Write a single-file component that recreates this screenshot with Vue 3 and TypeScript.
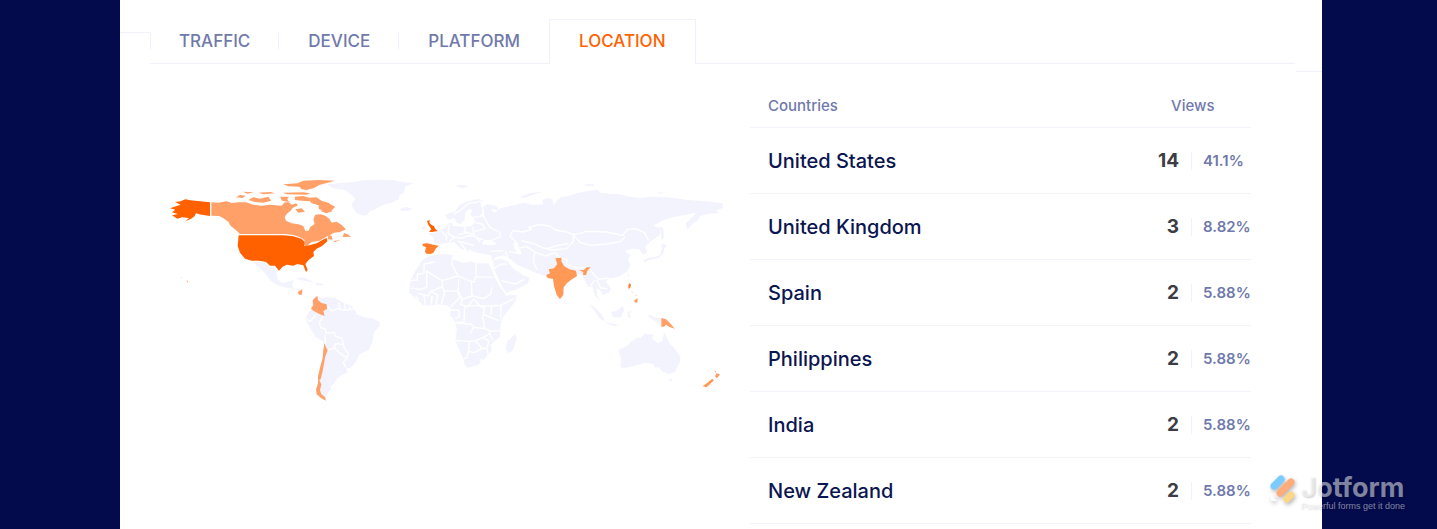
<script setup lang="ts">
interface Country {
  name: string
  views: number
  share: string
}

interface Shape {
  tone: 'land' | 'top' | 'high' | 'mid' | 'low' | 'water' | 'border'
  d: string
}

interface Region {
  name: string
  x: number
  y: number
  shapes: Shape[]
}

const tabs: string[] = ['TRAFFIC', 'DEVICE', 'PLATFORM', 'LOCATION']
const active = 'LOCATION'

const countries: Country[] = [
  { name: 'United States', views: 14, share: '41.1%' },
  { name: 'United Kingdom', views: 3, share: '8.82%' },
  { name: 'Spain', views: 2, share: '5.88%' },
  { name: 'Philippines', views: 2, share: '5.88%' },
  { name: 'India', views: 2, share: '5.88%' },
  { name: 'New Zealand', views: 2, share: '5.88%' },
]

const regions: Region[] = [
  {
    name: 'north-america',
    x: 36,
    y: 0,
    shapes: [
      { tone: 'land', d: 'M275 276L298 276 318 280 330 292 342 292 350 308 353 328 368 340 388 334 402 330 396 346 402 356 424 358 420 364 396 356 372 352 345 343 330 330 315 310 300 295 288 284zM288 284L300 304 306 314 296 302zM405 326L430 322 452 332 464 338 440 334zM468 338L492 342 484 348 466 344z' },
      { tone: 'low', d: 'M154 97L175 98 200 94 215 99 236 97 258 97 280 104 305 107 330 104 365 107 374 97 386 97 396 104 408 100 414 106 398 114 392 122 380 132 374 142 378 152 395 160 415 163 430 168 436 183 446 182 450 172 464 162 460 148 466 134 482 133 496 137 508 146 515 158 530 155 546 166 558 178 540 186 522 188 500 200 478 212 455 216 440 228 432 224 434 210 420 202 400 195 375 192 240 192 225 178 212 168 205 155 190 145 178 138 154 137z' },
      { tone: 'low', d: 'M228 82L240 75 257 77 248 84zM265 90L280 82 300 86 325 80 334 92 310 98 285 96zM248 65L282 67 262 71zM295 68L330 66 345 70 310 73zM370 43L412 40 430 32 475 30 525 32 500 39 478 45 462 54 440 60 425 58 418 50 385 49zM368 68L430 67 450 70 440 74 380 73zM404 80L430 78 448 83 470 82 484 92 505 98 516 106 526 110 514 122 490 122 476 116 476 106 455 100 450 94 425 92 405 90zM360 80L386 80 382 88 388 96 366 92zM406 118L425 115 435 125 415 128zM480 122L508 118 518 124 498 130z' },
      { tone: 'low', d: 'M552 189L562 193 573 200 548 201zM505 195L515 197 518 209 503 208zM520 213L541 210 524 217z' },
      { tone: 'top', d: 'M45 96L62 94 76 88 92 91 120 94 150 97 150 138 130 135 118 133 108 130 104 138 94 146 76 154 87 144 66 142 52 146 36 136 54 132 36 127 46 119 30 115 48 109 62 104z' },
      { tone: 'top', d: 'M236 196L370 196 400 199 424 206 434 216 432 227 448 226 470 220 488 209 500 204 502 214 486 228 470 236 460 246 462 258 446 270 436 282 443 300 438 306 430 286 412 282 400 287 380 284 368 290 357 302 345 287 330 287 318 276 298 272 275 272 255 266 240 248 233 228z' },
      { tone: 'low', d: 'M413 366L427 358 426 374 417 374zM79 331L84 334 82 338zM62 322L65 323 64 325z' },
    ],
  },
  {
    name: 'atlantic',
    x: 426,
    y: 0,
    shapes: [
      { tone: 'land', d: 'M110 43L150 39 190 36 220 31 260 29 310 30 340 37 372 39 346 50 342 68 328 76 326 88 310 96 282 104 258 116 240 124 228 137 214 136 200 130 190 116 184 102 196 88 188 78 165 60 130 55zM330 116L348 111 368 116 357 122 336 123z' },
    ],
  },
  {
    name: 'south-america',
    x: 426,
    y: 345,
    shapes: [
      { tone: 'land', d: 'M70 37L82 33 95 40 110 36 135 38 150 48 168 56 190 66 200 88 222 96 246 100 268 110 270 122 252 142 247 172 236 195 208 208 198 230 180 250 168 248 172 262 152 272 142 280 132 296 122 304 124 314 112 324 106 340 92 334 82 310 86 280 96 230 104 180 98 168 76 155 58 124 48 108 50 90 62 75z' },
      { tone: 'border', d: 'M110 62L125 78 145 70 162 76 192 72M146 52L150 72M164 56L166 74M178 64L180 74M102 92L88 112 92 128 106 132 108 145 132 142 138 155 156 160 160 178 136 176 132 190 110 196M104 150L106 176M160 178L164 192 176 206 172 218 154 208 134 190M172 218L160 232 168 248M50 104L62 108 78 88' },
      { tone: 'low', d: 'M82 32L84 45 94 54 110 58 111 72 100 78 104 93 88 87 70 77 63 71 70 60 68 46z' },
      { tone: 'low', d: 'M103 174L107 185 113 196 106 214 102 236 98 258 92 282 88 286 94 298 90 316 94 328 105 336 108 347 94 340 80 328 78 314 84 294 84 274 92 240 98 220 100 195z' },
    ],
  },
  {
    name: 'eurasia',
    x: 756,
    y: 30,
    shapes: [
      { tone: 'land', d: 'M135 105L150 98 165 95 178 76 192 68 210 62 235 57 249 62 244 76 250 95 240 108 218 110 210 104 218 90 206 88 196 100 194 118 182 132 170 128 164 114 145 120zM165 16L182 14 206 17 186 26zM360 52L380 42 400 38 428 36 400 44 372 54zM66 142L76 136 77 146 68 150zM553 13L580 12 584 18 560 18zM770 37L800 38 778 42z' },
      { tone: 'land', d: 'M84 160L105 158 112 152 135 145 146 130 155 128 158 138 190 140 214 138 226 126 222 114 248 110 252 96 248 80 262 72 290 78 296 90 272 88 282 98 304 84 340 76 372 68 396 74 430 73 426 60 444 53 456 58 462 76 470 62 485 50 505 48 530 40 566 32 592 30 602 38 634 42 656 42 690 50 722 54 752 50 804 52 862 60 920 64 968 70 968 84 946 92 960 98 924 102 900 108 896 120 876 132 862 150 857 130 880 108 888 98 860 104 838 108 818 112 786 122 760 137 780 144 780 165 750 185 735 200 742 218 729 224 718 208 698 206 675 214 692 224 684 238 692 255 682 274 656 290 625 296 618 306 633 325 628 337 608 346 600 330 590 325 592 346 602 366 584 346 578 320 564 320 553 298 545 284 522 280 510 300 485 330 480 355 465 330 458 298 436 288 410 280 380 266 350 254 332 238 310 226 285 232 276 246 274 226 245 221 222 216 208 208 203 216 192 198 174 180 188 200 194 210 182 206 162 186 142 188 120 192 102 190 100 172z' },
      { tone: 'land', d: 'M729 242L742 234 766 230 780 226 786 206 784 190 800 196 792 208 790 220 776 234 748 240 734 246zM780 138L790 146 792 174 784 178z' },
      { tone: 'water', d: 'M246 193L252 180 274 180 292 192 270 196zM340 190L354 188 356 204 366 220 352 222 344 206z' },
      { tone: 'border', d: 'M160 104L182 90 200 74 214 68 230 68 238 62M242 62L248 84 250 108M250 108L270 142 298 156 302 170 276 180M226 128L246 132 256 146 224 154M218 140L222 164 200 158 174 164M148 134L144 160 164 172 148 184M124 154L140 168 138 184M164 172L186 174 208 166 226 170 240 186M174 184L200 190 222 196M196 140L192 154 210 160M222 168L236 176 250 178M330 168L338 152 370 156 394 148 386 142 418 134 450 138 466 150 500 156 520 164 540 160 560 154 620 156 668 166 682 148 706 146 734 158 746 182M330 168L350 188M364 182L400 190 430 204 458 210 500 206 520 184 520 164M356 204L380 200 404 216 436 228M404 218L400 246 412 270M436 228L466 218 480 234M480 234L500 238 500 254 530 264 568 262M520 166L542 188 572 196 620 192 662 184 676 170M440 206L474 196 506 190M316 214L326 240M326 214L362 222M272 214L310 212M568 262L580 282 596 298 626 294M572 318L584 300M590 300L602 324 622 326' },
      { tone: 'top', d: 'M81 123L89 120 88 128 94 134 102 139 106 147 113 153 96 156 87 155 94 148 90 142 85 134z' },
      { tone: 'high', d: 'M68 191L82 190 100 194 116 197 106 207 102 217 92 222 80 221 75 216 78 202 68 197z' },
      { tone: 'mid', d: 'M466 235L485 233 484 244 492 258 508 268 528 272 531 288 516 298 500 310 491 322 490 344 480 358 470 344 462 318 459 296 444 295 438 286 450 280 446 268 462 265 472 252z' },
      { tone: 'mid', d: 'M537 271L552 270 560 262 572 262 562 272 558 286 549 284 550 276z' },
    ],
  },
  {
    name: 'africa',
    x: 756,
    y: 240,
    shapes: [
      { tone: 'land', d: 'M68 30L82 20 105 15 130 12 157 14 157 28 172 32 190 40 212 34 230 40 266 40 274 58 286 86 304 116 318 136 350 135 346 154 326 180 306 205 302 225 300 260 272 284 275 302 256 324 234 345 202 354 194 344 190 326 178 300 166 272 170 240 165 215 150 196 152 175 140 165 110 163 90 167 70 165 45 145 28 128 30 95 46 62zM345 252L350 265 338 302 324 310 317 296 322 274z' },
      { tone: 'land', d: 'M280 32L302 26 322 34 342 58 368 74 390 84 382 102 350 118 318 128 306 110 298 92 282 58z' },
      { tone: 'border', d: 'M30 92L52 90 52 72 72 70 72 42 104 36M80 62L80 112 60 118 34 114M78 62L126 92 174 78 156 44 156 24M126 92L128 110 92 124 84 138 54 130M174 78L214 94 216 138 186 148 174 122 176 88M228 40L228 80 278 82M216 94L222 96 228 80M128 110L134 128 124 162M92 124L114 136 108 162M134 122L174 124 180 142 152 170M72 138L76 164M96 138L94 164M46 138L56 150M186 148L182 164 204 170 222 146M218 138L250 146 272 132 276 112M222 148L240 168 272 168 302 166 342 146M194 170L192 216 166 218M194 170L232 166 254 174 248 200 254 236 220 232 214 222 172 220M252 194L296 212M254 236L276 244 300 242M274 168L274 194M304 168L302 202M166 272L210 274 226 272 250 262 270 250 264 236M210 250L220 234M208 274L206 302 200 324 190 326M206 304L222 308 246 296 234 280 224 276M246 296L260 294 266 318M248 262L266 272 262 292M268 248L278 270M304 92L346 102 372 88M282 56L302 42 322 42M150 180L176 180 178 200 164 206' },
      { tone: 'water', d: 'M238 330L244 326 250 332 244 337z' },
    ],
  },
  {
    name: 'oceania',
    x: 1176,
    y: 240,
    shapes: [
      { tone: 'land', d: 'M148 163L162 170 186 194 195 214 180 206 164 184zM194 217L214 220 238 226 220 228zM212 186L230 182 248 168 253 180 242 202 220 202zM262 186L276 182 268 190 272 204 264 202zM322 196L334 196 344 202 362 203 362 229 352 216 336 208zM72 146L78 152 74 158zM262 76L266 70 266 82z' },
      { tone: 'land', d: 'M236 300L262 287 274 274 288 264 302 264 314 252 342 254 336 266 354 280 368 272 372 246 380 262 388 280 404 296 420 318 420 336 404 366 386 372 366 364 356 350 346 354 340 342 316 338 282 348 250 355 242 350 243 328zM385 387L398 388 392 396z' },
      { tone: 'low', d: 'M364 204L378 208 390 219 404 236 388 231 378 224 372 230 364 230z' },
      { tone: 'high', d: 'M267 100L273 103 271 113 266 117 265 108z' },
      { tone: 'mid', d: 'M283 151L293 145 292 157 285 158zM275 124L278 127 276 128zM287 133L290 137 288 138z' },
      { tone: 'mid', d: 'M522 360L527 364 528 370 540 373 531 385 525 379 529 372zM517 386L522 391 500 412 488 409 500 400z' },
    ],
  },
]
</script>

<template>
  <div class="page">
    <main class="card">
      <nav class="tabs" aria-label="Analytics">
        <button
          v-for="tab in tabs"
          :key="tab"
          type="button"
          class="tab"
          :class="{ active: tab === active }"
        >
          {{ tab }}
        </button>
      </nav>
      <i class="rule rule-left"></i>
      <i class="rule rule-right"></i>

      <section class="content">
        <svg class="map" viewBox="0 0 1728 720" role="img" aria-label="Views by country">
          <g v-for="r in regions" :key="r.name" :transform="`translate(${r.x} ${r.y})`">
            <path v-for="(s, i) in r.shapes" :key="i" :class="s.tone" :d="s.d" />
          </g>
        </svg>

        <table class="list">
          <colgroup>
            <col />
            <col class="col-views" />
            <col class="col-share" />
          </colgroup>
          <thead>
            <tr>
              <th class="name" scope="col">Countries</th>
              <th class="total" scope="colgroup" colspan="2">Views</th>
            </tr>
          </thead>
          <tbody>
            <tr v-for="c in countries" :key="c.name">
              <td class="name">{{ c.name }}</td>
              <td class="views">{{ c.views }}</td>
              <td class="share"><span>{{ c.share }}</span></td>
            </tr>
          </tbody>
        </table>
      </section>
    </main>

    <div class="brand">
      <svg class="mark" viewBox="0 0 30 38" aria-hidden="true">
        <g fill="none" stroke-linecap="round" stroke-width="7">
          <path d="M6 13L13 6" stroke="#7accff" />
          <path d="M12 20L23 9" stroke="#ffab7a" />
          <path d="M19 26L23 22" stroke="#ffd686" />
        </g>
        <path d="M3 22L9 28H4Q3 28 3 27z" fill="#fff" />
      </svg>
      <div class="words">
        <strong>Jotform</strong>
        <small>Powerful forms get it done</small>
      </div>
    </div>
  </div>
</template>

<style>
body {
  margin: 0;
  background: #030b4d;
}
</style>

<style scoped>
.page {
  position: relative;
  box-sizing: border-box;
  height: 100vh;
  overflow: hidden;
  padding: 0 115px 0 120px;
  background: #030b4d;
  font-family: Inter, "Liberation Sans", sans-serif;
}

.card {
  position: relative;
  box-sizing: border-box;
  min-height: 100%;
  padding-top: 19px;
  background: #fff;
}

.tabs {
  display: flex;
  margin: 0 27px 0 30px;
  border-bottom: 1px solid #f1f1fb;
}

.tab {
  position: relative;
  box-sizing: border-box;
  height: 44px;
  padding: 0 29px;
  border: 0;
  background: none;
  color: #7079ab;
  font: 500 17px/44px Inter, "Liberation Sans", sans-serif;
}

.tab:nth-child(-n + 2)::after {
  content: "";
  position: absolute;
  top: 14px;
  right: 0;
  width: 1px;
  height: 16px;
  background: #f1f1fb;
}

.tab.active {
  height: 45px;
  margin-bottom: -1px;
  padding-bottom: 2px;
  border: 1px solid #f1f1fb;
  border-bottom: 0;
  background: #fff;
  color: #ff6100;
  line-height: 42px;
}

.rule {
  position: absolute;
  box-sizing: border-box;
  border-top: 1px solid #f1f1fb;
}

.rule-left {
  top: 32px;
  left: 0;
  width: 31px;
  height: 17px;
  border-right: 1px solid #f1f1fb;
}

.rule-right {
  top: 71px;
  right: 0;
  width: 26px;
}

.content {
  display: grid;
  grid-template-columns: 576fr 501fr;
  gap: 26px;
  align-items: start;
  padding: 20px 71px 0 28px;
}

.map {
  display: block;
  width: 100%;
  margin-top: 86px;
}

.map path {
  stroke-linejoin: round;
}

.land {
  fill: #f3f3fe;
}

.top {
  fill: #ff6100;
}

.high {
  fill: #ff7f2a;
}

.mid {
  fill: #ff9955;
}

.low {
  fill: #ffa069;
}

.water {
  fill: #fff;
}

.border {
  fill: none;
  stroke: #fff;
  stroke-width: 4;
}

.list {
  width: 100%;
  border-collapse: separate;
  border-spacing: 0;
  table-layout: fixed;
}

.col-views {
  width: 41px;
}

.col-share {
  width: 60px;
}

.list th,
.list td {
  box-sizing: border-box;
  padding: 0;
  border-bottom: 1px solid #f3f3fb;
}

.list th {
  height: 44px;
  color: #7079ab;
  font-size: 15px;
  font-weight: 500;
  text-align: left;
}

.list td {
  height: 66px;
}

.list .name {
  padding-left: 18px;
}

.list .total {
  padding-left: 21px;
}

.list td.name {
  color: #0a1551;
  font-size: 20px;
  font-weight: 500;
}

.list .views {
  padding-right: 12px;
  color: #3c3c44;
  font-size: 19px;
  font-weight: 700;
  text-align: right;
}

.list .share {
  color: #7079ab;
  font-size: 15px;
  font-weight: 600;
}

.share span {
  display: block;
  padding-left: 11px;
  border-left: 1px solid #f1f1fb;
  line-height: 18px;
}

.brand {
  position: absolute;
  right: 32px;
  bottom: 18px;
  display: flex;
  gap: 2px;
  align-items: flex-start;
}

.mark {
  width: 30px;
  height: 38px;
  filter: drop-shadow(1px 2px 2px rgba(0, 0, 0, 0.3));
}

.words {
  display: flex;
  flex-direction: column;
  padding-top: 1px;
  color: rgba(255, 255, 255, 0.5);
  text-shadow: 1px 1px 2px rgba(0, 0, 0, 0.2);
}

.words strong {
  font-size: 27px;
  font-weight: 700;
  line-height: 28px;
}

.words small {
  font: 9px/9px "Liberation Sans", sans-serif;
}
</style>
